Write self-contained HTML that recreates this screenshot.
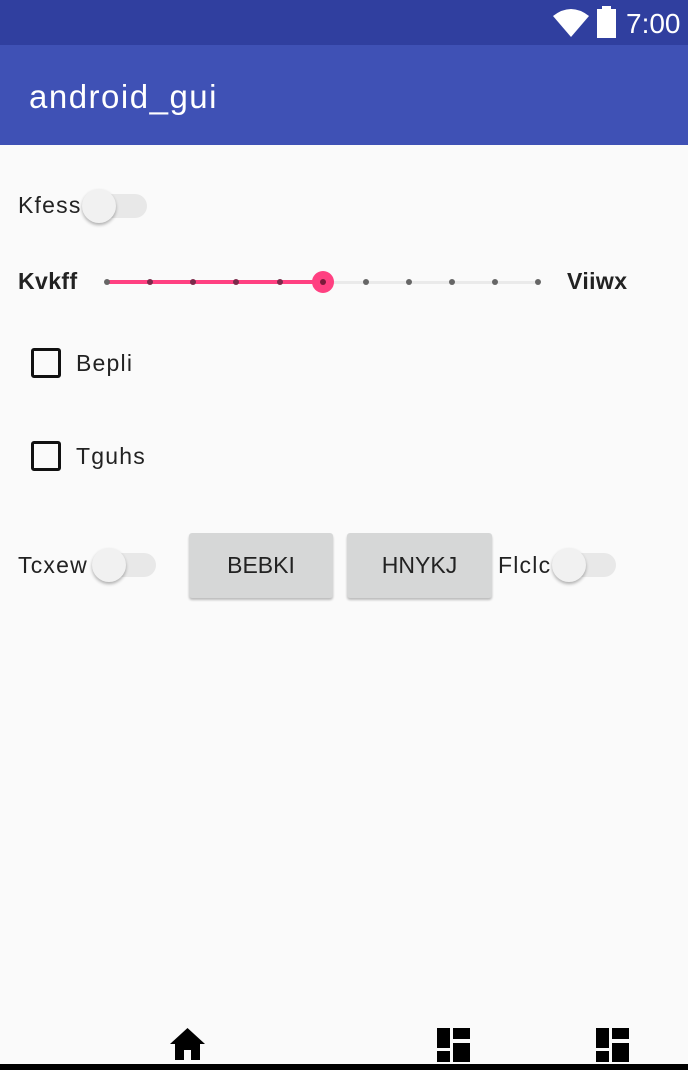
<!DOCTYPE html>
<html><head><style>
*{margin:0;padding:0;box-sizing:border-box}
body{width:688px;height:1070px;background:#fafafa;position:relative;overflow:hidden;font-family:"Liberation Sans",sans-serif;color:#222}
.abs{position:absolute}
.t{font-size:23px;position:absolute;line-height:1;letter-spacing:1.2px}
.sw-track{position:absolute;height:24px;width:58px;border-radius:12px;background:#e8e8e8}
.sw-thumb{position:absolute;width:34px;height:34px;border-radius:50%;background:#f1f1f1;box-shadow:0 2px 3px rgba(0,0,0,.3)}
.cb{position:absolute;width:30px;height:30px;border:3px solid #111;border-radius:3px}
.btn{position:absolute;background:#d6d7d7;border-radius:3px;box-shadow:0 2px 2px rgba(0,0,0,.25);font-size:23px;display:flex;align-items:center;justify-content:center;color:#222}
.dot{position:absolute;width:6px;height:6px;border-radius:50%;background:#666;top:279px}
</style></head><body>
<div class="abs" style="left:0;top:0;width:688px;height:45px;background:#303f9f"></div>
<svg class="abs" style="left:553px;top:8px" width="36" height="30" viewBox="0 0 36 30"><path d="M0 8 Q18 -6 36 8 L18 29 Z" fill="#fff"/></svg>
<div class="abs" style="left:597px;top:9px;width:19px;height:29px;background:#fff"></div>
<div class="abs" style="left:602px;top:6px;width:9px;height:4px;background:#fff"></div>
<div class="abs" style="left:626px;top:8px;font-size:28px;color:#fff">7:00</div>
<div class="abs" style="left:0;top:45px;width:688px;height:100px;background:#3f51b5"></div>
<div class="abs" style="left:29px;top:78px;font-size:33px;color:#fff;letter-spacing:1.5px">android_gui</div>

<div class="t" style="left:18px;top:194px">Kfess</div>
<div class="sw-track" style="left:89px;top:194px"></div>
<div class="sw-thumb" style="left:82px;top:189px"></div>

<div class="t" style="left:18px;top:270px;font-weight:bold;letter-spacing:0.4px">Kvkff</div>
<div class="abs" style="left:107px;top:281px;width:431px;height:3px;background:#eaeaea"></div>
<div class="abs" style="left:107px;top:280px;width:216px;height:4px;background:#ff4081"></div>
<div class="dot" style="left:104px"></div><div class="dot" style="left:147px;background:#7a2a4a"></div><div class="dot" style="left:190px;background:#7a2a4a"></div><div class="dot" style="left:233px;background:#7a2a4a"></div><div class="dot" style="left:277px;background:#7a2a4a"></div>
<div class="dot" style="left:363px"></div><div class="dot" style="left:406px"></div><div class="dot" style="left:449px"></div><div class="dot" style="left:492px"></div><div class="dot" style="left:535px"></div>
<div class="abs" style="left:312px;top:271px;width:22px;height:22px;border-radius:50%;background:#ff4081"></div>
<div class="abs" style="left:320px;top:279px;width:6px;height:6px;border-radius:50%;background:#7a1a3a"></div>
<div class="t" style="left:567px;top:270px;font-weight:bold;letter-spacing:0.4px">Viiwx</div>

<div class="cb" style="left:31px;top:348px"></div>
<div class="t" style="left:76px;top:352px">Bepli</div>
<div class="cb" style="left:31px;top:441px"></div>
<div class="t" style="left:76px;top:445px">Tguhs</div>

<div class="t" style="left:18px;top:554px">Tcxew</div>
<div class="sw-track" style="left:98px;top:553px"></div>
<div class="sw-thumb" style="left:92px;top:548px"></div>
<div class="btn" style="left:189px;top:533px;width:144px;height:65px">BEBKI</div>
<div class="btn" style="left:347px;top:533px;width:145px;height:65px">HNYKJ</div>
<div class="t" style="left:498px;top:554px">Flclc</div>
<div class="sw-track" style="left:558px;top:553px"></div>
<div class="sw-thumb" style="left:552px;top:548px"></div>

<svg class="abs" style="left:170px;top:1028px" width="35" height="32" viewBox="0 0 35 32"><path d="M17.5 0 L35 16 L30 16 L30 32 L21 32 L21 22 L14 22 L14 32 L5 32 L5 16 L0 16 Z" fill="#000"/></svg>
<svg class="abs" style="left:437px;top:1028px" width="33" height="34" viewBox="0 0 33 34"><rect x="0" y="0" width="13" height="20"/><rect x="0" y="23" width="13" height="11"/><rect x="16" y="0" width="17" height="11"/><rect x="16" y="15" width="17" height="19"/></svg>
<svg class="abs" style="left:596px;top:1028px" width="33" height="34" viewBox="0 0 33 34"><rect x="0" y="0" width="13" height="20"/><rect x="0" y="23" width="13" height="11"/><rect x="16" y="0" width="17" height="11"/><rect x="16" y="15" width="17" height="19"/></svg>
<div class="abs" style="left:0;top:1064px;width:688px;height:6px;background:#000"></div>
</body></html>
